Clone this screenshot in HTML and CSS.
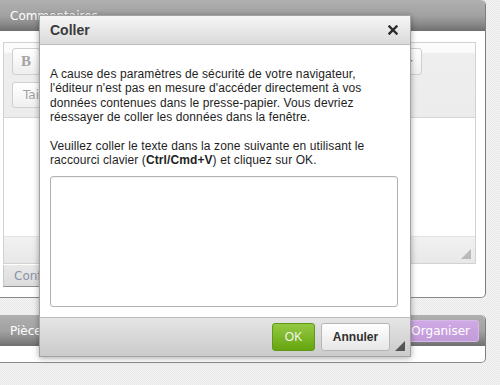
FILE: index.html
```html
<!DOCTYPE html>
<html lang="fr">
<head>
    <meta charset="UTF-8">
    <meta name="viewport" content="width=device-width, initial-scale=1.0">
    <title>Coller</title>
    <link rel="stylesheet" href="styles.css">
</head>
<body>
    <div class="page">
        <section class="panel">
            <div class="panel-head">Commentaires</div>
            <div class="panel-body">
                <div class="editor">
                    <div class="editor-toolbar">
                        <div class="tool-row">
                            <span class="tool-btn">B</span>
                            <span class="tool-combo tool-combo-right">Format<span class="combo-arrow"></span></span>
                        </div>
                        <div class="tool-row">
                            <span class="tool-combo">Taille</span>
                        </div>
                    </div>
                    <div class="editor-area"></div>
                    <div class="editor-status"><span class="resize-grip"></span></div>
                </div>
                <button type="button" class="tab-btn">Confirmer</button>
            </div>
        </section>

        <section class="panel panel-files">
            <div class="panel-head">
                <span>Pièces jointes</span>
                <button type="button" class="organise-btn">Organiser</button>
            </div>
            <div class="panel-body"></div>
        </section>
    </div>

    <div class="dialog">
        <div class="dialog-title">
            <span>Coller</span>
            <svg class="dialog-close" width="10" height="10" viewBox="0 0 10 10">
                <path d="M1.5 1.5 L8.5 8.5 M8.5 1.5 L1.5 8.5" stroke="#2b2b2b" stroke-width="2.4" stroke-linecap="square"/>
            </svg>
        </div>
        <div class="dialog-body">
            <p>A cause des paramètres de sécurité de votre navigateur, l'éditeur n'est pas en mesure d'accéder directement à vos données contenues dans le presse-papier. Vous devriez réessayer de coller les données dans la fenêtre.</p>
            <p>Veuillez coller le texte dans la zone suivante en utilisant le raccourci clavier (<strong>Ctrl/Cmd+V</strong>) et cliquez sur OK.</p>
            <textarea class="paste-area"></textarea>
        </div>
        <div class="dialog-footer">
            <button type="button" class="btn-ok">OK</button>
            <button type="button" class="btn-cancel">Annuler</button>
            <span class="dialog-grip"></span>
        </div>
    </div>
</body>
</html>
```

FILE: styles.css
```css
body {
    margin: 0;
    font-family: "DejaVu Sans", Verdana, sans-serif;
    background-color: #efefef;
    background-image: repeating-conic-gradient(#f3f3f3 0 25%, #e9e9e9 0 50%);
    background-size: 2px 2px;
    height: 385px;
    overflow: hidden;
}

.page {
    width: 486px;
}

.panel {
    background: #fff;
    border-right: 1px solid #7d7d7d;
    border-bottom: 1px solid #8a8a8a;
    border-radius: 0 5px 5px 0;
}

.panel-head {
    display: flex;
    align-items: center;
    justify-content: space-between;
    height: 31px;
    padding: 0 6px 0 10px;
    color: #fff;
    font-size: 12px;
    border-radius: 0 5px 0 0;
    background: linear-gradient(#afafaf 0%, #a2a2a2 50%, #8c8c8c 75%, #6f6f6f 100%);
}

.panel-body {
    padding: 11px 9px 10px 3px;
}

.editor {
    border: 1px solid #d2d2d2;
}

.editor-toolbar {
    display: flex;
    flex-direction: column;
    gap: 7px;
    padding: 5px 8px 9px;
    border-bottom: 1px solid #d6d6d6;
    background: linear-gradient(#fbfbfb 0, #fbfbfb 9px, #eeeeee 11px, #ececec 100%);
}

.tool-row {
    display: flex;
    align-items: center;
}

.tool-btn {
    width: 26px;
    height: 25px;
    line-height: 25px;
    text-align: center;
    font-family: "Liberation Serif", serif;
    font-weight: bold;
    font-size: 15px;
    color: #a4a4a4;
    border: 1px solid #cfcfcf;
    border-radius: 3px;
    background: linear-gradient(#ffffff, #eeeeee);
}

.tool-combo {
    position: relative;
    width: 96px;
    height: 24px;
    line-height: 24px;
    padding-left: 10px;
    font-size: 12px;
    color: #a0a0a0;
    border: 1px solid #cfcfcf;
    border-radius: 3px;
    background: linear-gradient(#ffffff, #f0f0f0);
}

.tool-combo-right {
    margin-left: auto;
    margin-right: 45px;
    height: 25px;
}

.combo-arrow {
    position: absolute;
    right: 8px;
    top: 11px;
    border-left: 3px solid transparent;
    border-right: 3px solid transparent;
    border-top: 3px solid #8a8a8a;
}

.editor-area {
    height: 118px;
    background: #fff;
}

.editor-status {
    position: relative;
    height: 26px;
    border-top: 1px solid #e2e2e2;
    background: linear-gradient(#f1f1f1, #e8e8e8);
}

.resize-grip {
    position: absolute;
    right: 4px;
    bottom: 4px;
    border-left: 10px solid transparent;
    border-bottom: 10px solid #b9b9b9;
}

.tab-btn {
    display: block;
    margin-top: 1px;
    height: 22px;
    padding: 0 10px;
    font-family: "DejaVu Sans", Verdana, sans-serif;
    font-size: 12px;
    color: #8a91a8;
    border: none;
    border-left: 1px solid #c8c8c8;
    border-bottom: 1px solid #8f8f8f;
    background: linear-gradient(#e9e9e9, #dcdcdc);
}

.panel-files {
    margin-top: 17px;
}

.panel-files .panel-body {
    height: 16px;
    padding: 0;
}

.organise-btn {
    height: 22px;
    padding: 0 8px;
    font-family: "DejaVu Sans", Verdana, sans-serif;
    font-size: 12px;
    color: #fff;
    border: 1px solid #d6b9e8;
    border-radius: 3px;
    background: linear-gradient(#cfa9e4, #c29bd9);
}

/* paste dialog, lies over the page */
.dialog {
    position: absolute;
    left: 39px;
    top: 15px;
    width: 370px;
    border: 1px solid #a3a3a3;
    background: #fff;
    box-shadow: 0 1px 6px rgba(0, 0, 0, 0.35);
    font-family: "Liberation Sans", Arial, sans-serif;
}

.dialog-title {
    display: flex;
    align-items: center;
    justify-content: space-between;
    height: 28px;
    padding: 0 12px 0 10px;
    font-size: 14px;
    font-weight: bold;
    color: #3a3a3a;
    border-bottom: 1px solid #bdbdbd;
    background: linear-gradient(#f6f6f6, #dadada);
}

.dialog-close {
    margin-top: -1px;
}

.dialog-body {
    padding: 22px 12px 10px 10px;
    font-size: 12px;
    line-height: 14.4px;
    letter-spacing: 0.1px;
    color: #1e1e1e;
}

.dialog-body p {
    margin: 0 0 14px;
}

.dialog-body p + p {
    margin-bottom: 9px;
}

.paste-area {
    display: block;
    box-sizing: border-box;
    width: 348px;
    height: 131px;
    margin: 0;
    resize: none;
    border: 1px solid #b2b2b2;
    border-radius: 3px;
    box-shadow: inset 0 1px 2px rgba(0, 0, 0, 0.06);
}

.dialog-footer {
    position: relative;
    display: flex;
    justify-content: flex-end;
    gap: 6px;
    height: 33px;
    padding: 5px 20px 0 0;
    border-top: 1px solid #bcbcbc;
    background: linear-gradient(#e5e5e5, #cbcbcb);
}

.dialog-footer button {
    height: 28px;
    border-radius: 3px;
    font-family: "Liberation Sans", Arial, sans-serif;
    font-size: 12px;
    cursor: pointer;
}

.btn-ok {
    width: 43px;
    color: #f4f4f4;
    border: 1px solid #5e9a16;
    background: linear-gradient(#94c943, #66a50f);
}

.btn-cancel {
    width: 69px;
    font-weight: bold;
    color: #2f2f2f;
    border: 1px solid #b6b6b6;
    background: linear-gradient(#ffffff, #e6e6e6);
}

.dialog-grip {
    position: absolute;
    right: 5px;
    bottom: 5px;
    border-left: 10px solid transparent;
    border-bottom: 10px solid #555;
}
```
